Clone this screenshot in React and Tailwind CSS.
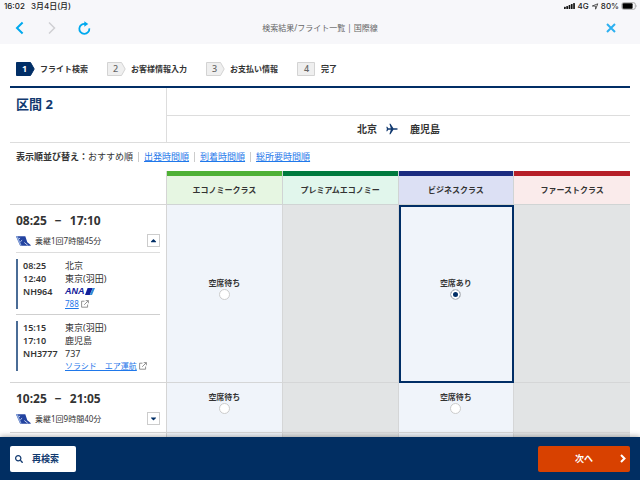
import { useState } from "react";
import { FaCaretDown, FaCaretUp, FaSearch } from "react-icons/fa";

const STEPS = ["フライト検索", "お客様情報入力", "お支払い情報", "完了"];

const SORTS = ["出発時間順", "到着時間順", "総所要時間順"];

const CLASSES = [
  { id: "economy", name: "エコノミークラス", bar: "bg-[#4eb135]", bg: "bg-[#e6f6e2]" },
  { id: "premium", name: "プレミアムエコノミー", bar: "bg-[#007a3e]", bg: "bg-[#e1f6ec]" },
  { id: "business", name: "ビジネスクラス", bar: "bg-[#1b2c80]", bg: "bg-[#dce0f4]" },
  { id: "first", name: "ファーストクラス", bar: "bg-[#b61f28]", bg: "bg-[#faebeb]" },
];

const FLIGHTS = [
  {
    id: "f1",
    dep: "08:25",
    arr: "17:10",
    duration: "乗継1回7時間45分",
    seats: { economy: "空席待ち", business: "空席あり" },
    segments: [
      { dep: "08:25", from: "北京", arr: "12:40", to: "東京(羽田)", no: "NH964", ana: true, link: "788" },
      { dep: "15:15", from: "東京(羽田)", arr: "17:10", to: "鹿児島", no: "NH3777", craft: "737", link: "ソラシド　エア運航" },
    ],
  },
  {
    id: "f2",
    dep: "10:25",
    arr: "21:05",
    duration: "乗継1回9時間40分",
    seats: { economy: "空席待ち", business: "空席待ち" },
    segments: [],
  },
];

function StatusBar() {
  return (
    <div className="flex h-3 items-center justify-between pl-1 pr-[2px] text-[8px] leading-3 text-[#222] font-['Inter','Noto_Sans_CJK_JP',sans-serif] font-medium">
      <div className="flex gap-[6px]">
        <span>16:02</span>
        <span>3月4日(月)</span>
      </div>
      <div className="flex items-center gap-[2px]">
        <svg width="12" height="8" viewBox="0 0 12 8" fill="#111">
          <rect x="0" y="4.700" width="1.700" height="2.300" rx=".5" />
          <rect x="2.300" y="4" width="1.700" height="3" rx=".5" />
          <rect x="4.600" y="3" width="1.700" height="4" rx=".5" />
          <rect x="6.900" y="2" width="1.700" height="5" rx=".5" />
          <rect x="9.200" y="1" width="1.700" height="6" rx=".5" />
        </svg>
        <span>4G</span>
        <svg width="8" height="7" viewBox="0 0 8 7" fill="none" stroke="#333" strokeWidth=".8" strokeLinejoin="round">
          <path d="M6.800.8 4.600 6.200V3.200L1.300 3z" />
        </svg>
        <span>80%</span>
        <svg width="17" height="8" viewBox="0 0 17 8">
          <rect x=".9" y=".7" width="13.400" height="6.600" rx="1.700" fill="none" stroke="#888" strokeWidth=".7" />
          <rect x="1.600" y="1.300" width="10" height="5.400" rx="1" fill="#000" />
          <path d="M15.200 2.800q1.200 1.200 0 2.400z" fill="#999" />
        </svg>
      </div>
    </div>
  );
}

function NavBar() {
  return (
    <div className="grid h-8 grid-cols-[1fr_auto_1fr] items-center px-6">
      <div className="-ml-3 flex items-center gap-4">
        <button type="button" aria-label="戻る">
          <svg width="16" height="14" viewBox="0 0 16 14" fill="none" stroke="#00a9ee" strokeWidth="2">
            <path d="M10.600 1.500 5 7l5.600 5.500" />
          </svg>
        </button>
        <button type="button" aria-label="進む">
          <svg width="16" height="14" viewBox="0 0 16 14" fill="none" stroke="#cfcfd3" strokeWidth="1.500">
            <path d="M5 1.500 10.500 7 5 12.500" />
          </svg>
        </button>
        <button type="button" aria-label="再読み込み">
          <svg width="16" height="14" viewBox="0 0 16 14" fill="none" stroke="#00a9ee" strokeWidth="1.800">
            <path d="M9.500 3A5 5 0 1 0 13.300 7.300" />
            <path d="M8.300.200v5.600L12.300 3z" fill="#00a9ee" stroke="none" />
          </svg>
        </button>
      </div>
      <h1 className="text-[8px] leading-3 text-[#666]">検索結果/フライト一覧 | 国際線</h1>
      <button type="button" aria-label="閉じる" className="justify-self-end">
        <svg width="10" height="10" viewBox="0 0 10 10" stroke="#2cb0f0" strokeWidth="2">
          <path d="M1 1l8 8M9 1 1 9" />
        </svg>
      </button>
    </div>
  );
}

function StepTag({ n, active, last }) {
  return (
    <span
      className={`relative flex h-[14px] w-[19px] items-center text-[9px] leading-3 ${
        last ? "justify-center" : "pl-[6px]"
      } ${active ? "font-bold text-white" : "font-medium text-[#666]"}`}
    >
      <svg className="absolute inset-0" width="19" height="14" viewBox="0 0 19 14">
        <path
          d={last ? "M.5.500H17.500V13.500H.500z" : "M.500.500H14.500L18.200 7 14.500 13.500H.500z"}
          fill={active ? "#012e66" : "#efefef"}
          stroke={active ? "#012e66" : "#d3d3d3"}
        />
      </svg>
      <span className="relative">{n}</span>
    </span>
  );
}

function TailMark() {
  return (
    <svg width="15" height="10" viewBox="0 0 15 10">
      <path d="M0 .3h9.300l2 5.900 3.400 2.900v.7H4.200z" fill="#2343a0" />
      <path d="M0 .3h1.800l3.900 9.500H4.200z" fill="#8ba6dc" />
      <path d="M2.600 3l1.500-1M4.300 5.800l1.800-1.600M8.300 6.500l3.400 2.700" stroke="#d5e0f5" strokeWidth=".9" />
    </svg>
  );
}

function AnaLogo() {
  return (
    <span className="flex h-[13px] items-center text-[9px] font-bold italic leading-[13px] text-[#13209a] font-['Liberation_Sans',sans-serif]">
      ANA
      <svg width="10" height="7" viewBox="0 0 10 7">
        <path d="M2.600 0H7.800L4.800 7H0z" fill="#13209a" />
        <path d="M7.800 0H10L7 7H4.800z" fill="#2f8fd8" />
      </svg>
    </span>
  );
}

function ExternalMark() {
  return (
    <svg width="8" height="8" viewBox="0 0 8 8" fill="none" stroke="#777" strokeWidth=".8">
      <path d="M3.500 1.200H.6v6H6.600V4.500M4.700.600h2.700v2.700M7.300.700 3.200 4.800" />
    </svg>
  );
}

function Segment({ seg, first }) {
  return (
    <div className={first ? "pb-[5px] pt-[6px]" : "border-t border-[#cfcfcf] pt-[6px]"}>
      <div className="grid grid-cols-[42px_1fr] border-l-2 border-[#4a6c96] pl-[5px] text-[9px] leading-[13px]">
        <b className="font-semibold">{seg.dep}</b>
        <span>{seg.from}</span>
        <b className="font-semibold">{seg.arr}</b>
        <span>{seg.to}</span>
        <b className="font-semibold">{seg.no}</b>
        {seg.ana ? <AnaLogo /> : <span>{seg.craft}</span>}
        <span className="col-start-2 flex items-center gap-[2px] whitespace-nowrap text-[8px] leading-[11px]">
          <a href="#" className="text-[#1f78ea] underline">
            {seg.link}
          </a>
          <ExternalMark />
        </span>
      </div>
    </div>
  );
}

function FlightSummary({ flight, open, onToggle }) {
  const Caret = open ? FaCaretUp : FaCaretDown;
  return (
    <>
      <div className="flex gap-2 pt-[9px] text-[12px] font-bold leading-[14px]">
        <span>{flight.dep}</span>
        <span>−</span>
        <span>{flight.arr}</span>
      </div>
      <div className="mt-[6px] flex h-[18px] items-start">
        <div className="flex flex-1 items-center gap-1 leading-[14px]">
          <TailMark />
          <span>{flight.duration}</span>
        </div>
        <button
          type="button"
          onClick={onToggle}
          aria-label="詳細"
          className="flex h-[13px] w-[13px] items-center justify-center border border-[#ccc] bg-white text-[#012e66]"
        >
          <Caret size={9} />
        </button>
      </div>
    </>
  );
}

export default function App() {
  const [selected, setSelected] = useState("f1-business");
  const [open, setOpen] = useState({ f1: true, f2: false });

  return (
    <div
      lang="ja"
      className="flex h-screen flex-col overflow-hidden bg-white text-[8px] leading-3 text-[#333] font-['Noto_Sans','Noto_Sans_CJK_JP',sans-serif]"
    >
      <header className="shrink-0 bg-[#f7f7fa]">
        <StatusBar />
        <NavBar />
      </header>

      <main className="min-h-0 flex-1 overflow-hidden px-[10px]">
        <ol className="flex h-[42px] items-center gap-[19px] pl-[6px] pt-2">
          {STEPS.map((s, i) => (
            <li key={s} className="flex items-center gap-[5px] font-bold">
              <StepTag n={i + 1} active={i === 0} last={i === STEPS.length - 1} />
              <span>{s}</span>
            </li>
          ))}
        </ol>

        <section className="grid grid-cols-[157px_1fr] border-b border-t-2 border-b-[#ddd] border-t-[#012e66]">
          <h2 className="border-r border-[#ddd] pl-[6px] pt-2 text-[13px] font-bold leading-4 text-[#123a70]">
            区間 2
          </h2>
          <div>
            <div className="h-7 border-b border-[#ddd]" />
            <div className="flex h-[26px] items-center justify-center text-[10px] font-bold leading-4">
              <span>北京</span>
              <svg className="ml-[9px] mr-3" width="12" height="12" viewBox="0 0 12 12" fill="#123a70">
                <path d="M11.800 6q0-.8-1.300-.8H7.400L4.500.700H3.400l1.400 4.500H2.300L1.200 3.800H.3L.9 6 .3 8.200h.9l1.100-1.400h2.500L3.400 11.300h1.100l2.900-4.500h3.100q1.300 0 1.300-.8z" />
              </svg>
              <span>鹿児島</span>
            </div>
          </div>
        </section>

        <nav className="flex h-7 items-center pl-[6px] text-[9px]">
          <b>表示順並び替え：</b>
          <span>おすすめ順</span>
          {SORTS.map((s) => (
            <span key={s} className="ml-[5px] border-l border-[#ccc] pl-[5px] leading-[10px]">
              <a href="#" className="text-[#1f78ea] underline">
                {s}
              </a>
            </span>
          ))}
        </nav>

        <table className="w-full table-fixed border-separate border-spacing-0">
          <thead>
            <tr>
              <td className="w-[157px] border-b border-r border-[#d5d5d5]" />
              {CLASSES.map((c) => (
                <th
                  key={c.id}
                  scope="col"
                  className={`border-b border-r border-[#d0d4d4] p-0 align-top last:border-r-0 ${c.bg}`}
                >
                  <div className={`h-[5px] ${c.bar}`} />
                  <div className="flex h-[28px] items-center justify-center">{c.name}</div>
                </th>
              ))}
            </tr>
          </thead>
          <tbody>
            {FLIGHTS.map((f) => (
              <tr key={f.id}>
                <td
                  className={`border-b border-r border-[#d5d5d5] p-0 pl-[6px] pr-[6px] align-top ${
                    open[f.id] && f.segments.length ? "h-[178px]" : "h-[50px]"
                  }`}
                >
                  <FlightSummary
                    flight={f}
                    open={open[f.id]}
                    onToggle={() => setOpen((o) => ({ ...o, [f.id]: !o[f.id] }))}
                  />
                  {open[f.id] && f.segments.length > 0 && (
                    <div className="border-t border-[#ddd]">
                      {f.segments.map((seg, i) => (
                        <Segment key={seg.no} seg={seg} first={i === 0} />
                      ))}
                    </div>
                  )}
                </td>
                {CLASSES.map((c) => {
                  const seat = f.seats[c.id];
                  const key = `${f.id}-${c.id}`;
                  if (!seat) {
                    return (
                      <td key={c.id} className="border-b border-r border-[#d5d6d7] bg-[#e2e4e5] last:border-r-0" />
                    );
                  }
                  return (
                    <td
                      key={c.id}
                      className={`border-b border-r border-[#d5d6d7] bg-[#f0f4fa] p-0 align-middle ${
                        selected === key ? "outline-2 -outline-offset-2 outline-[#012e66]" : ""
                      }`}
                    >
                      <label className="flex flex-col items-center pb-3 font-bold">
                        {seat}
                        <input
                          type="radio"
                          name="seat"
                          checked={selected === key}
                          onChange={() => setSelected(key)}
                          className="-mb-px h-[11px] w-[11px] appearance-none rounded-full border border-[#ccc] bg-white checked:bg-[#012e66] checked:shadow-[inset_0_0_0_2px_#fff]"
                        />
                      </label>
                    </td>
                  );
                })}
              </tr>
            ))}
            <tr>
              <td className="h-[50px] border-r border-[#d5d5d5]" />
              <td className="border-r border-[#d5d6d7] bg-[#f0f4fa]" />
              <td className="border-r border-[#d5d6d7] bg-[#e2e4e5]" />
              <td className="border-r border-[#d5d6d7] bg-[#f0f4fa]" />
              <td className="bg-[#e2e4e5]" />
            </tr>
          </tbody>
        </table>
      </main>

      <footer className="relative flex h-[43px] shrink-0 items-center justify-between bg-[#012e62] px-[10px] shadow-[0_-1px_5px_rgba(0,0,0,0.3)]">
        <button
          type="button"
          className="flex h-[26px] w-[66px] items-center gap-[9px] rounded-xs bg-white pl-[5px] text-[9px] font-bold text-[#123a70]"
        >
          <FaSearch size={8} />
          再検索
        </button>
        <button
          type="button"
          className="grid h-[26px] w-[92px] grid-cols-[1fr_auto_1fr] items-center rounded-xs bg-[#d84100] pl-1 pr-1 text-[9px] font-bold text-white"
        >
          <span className="col-start-2">次へ</span>
          <svg className="justify-self-end" width="6" height="9" viewBox="0 0 6 9" fill="none" stroke="#fff" strokeWidth="2">
            <path d="M1 1l3.500 3.500L1 8" />
          </svg>
        </button>
      </footer>
    </div>
  );
}
